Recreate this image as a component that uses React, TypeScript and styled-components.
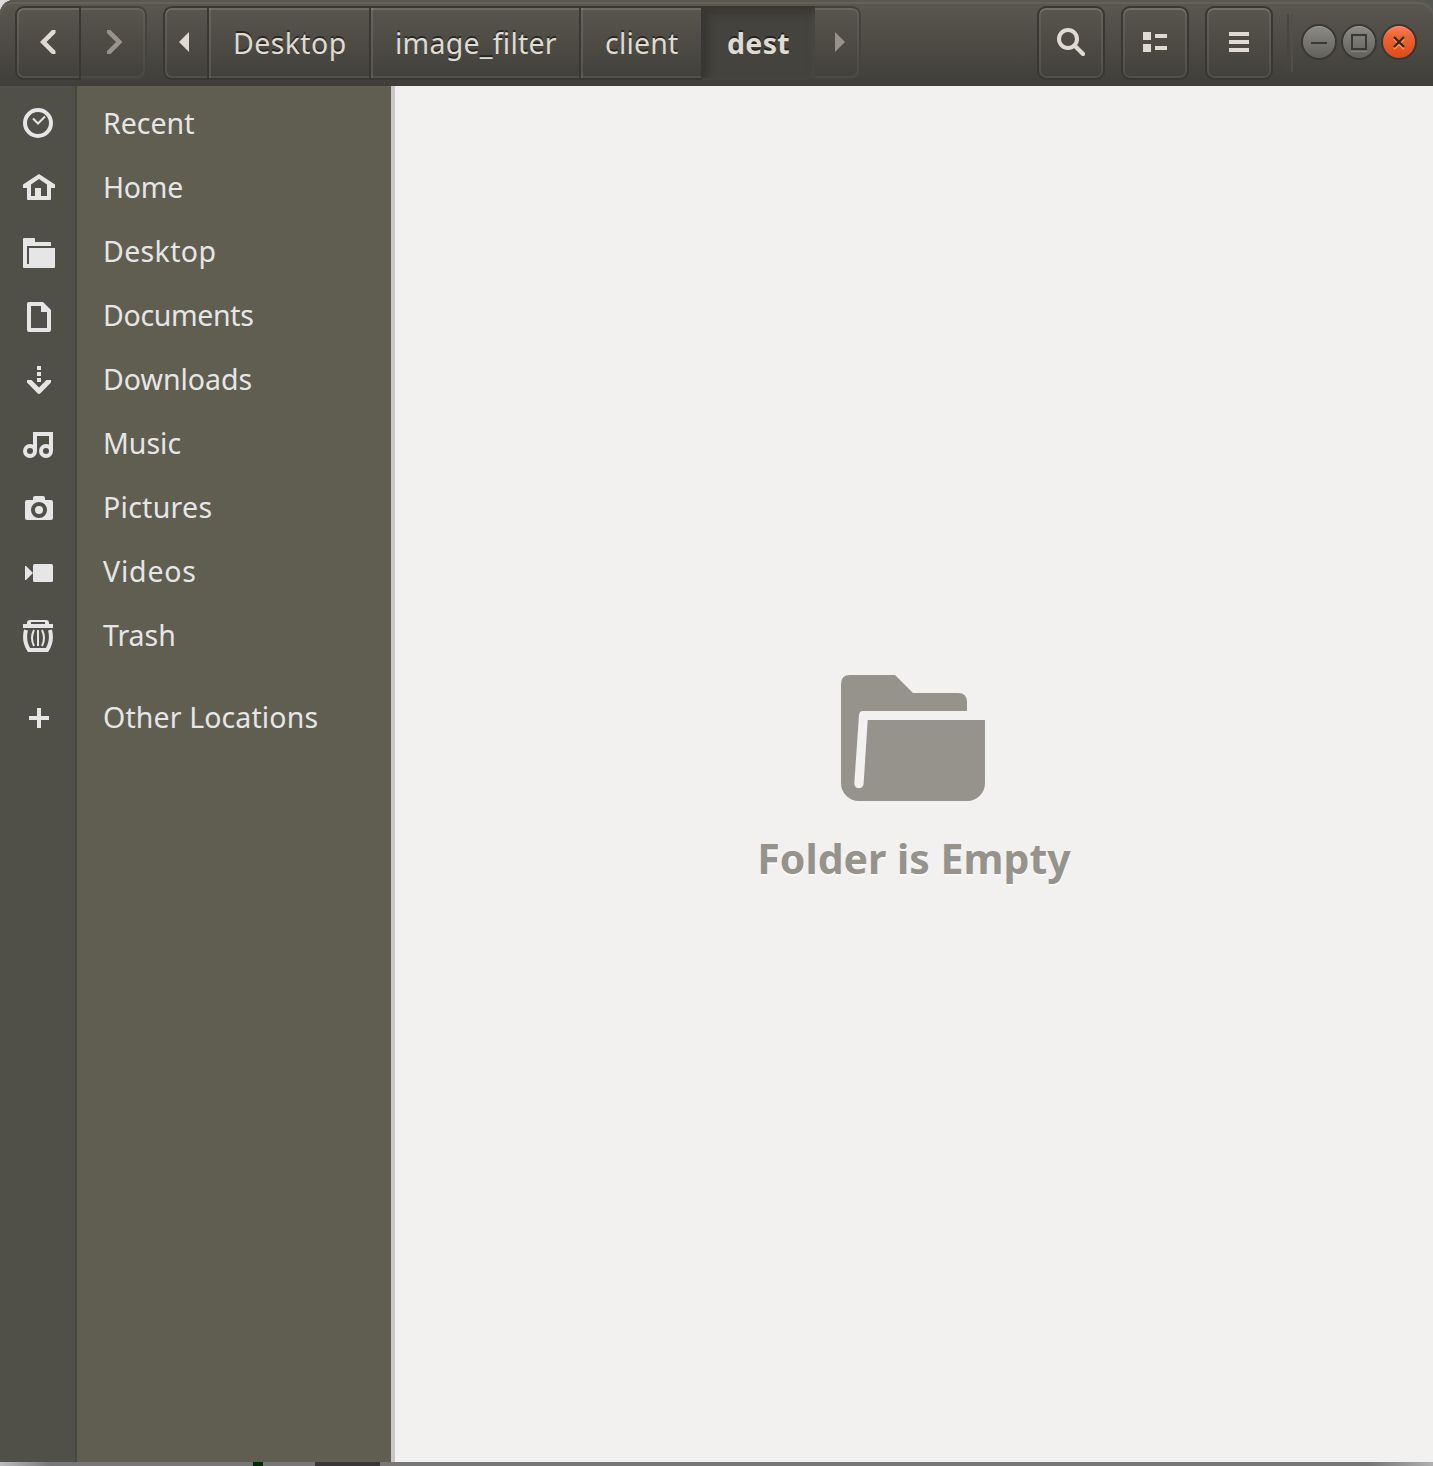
import React from "react";
import styled, { createGlobalStyle, css } from "styled-components";

const Global = createGlobalStyle`
  html, body { margin: 0; padding: 0; background: #c9c9c9; }
  *, *::before, *::after { box-sizing: border-box; }
`;

const font = `"Noto Sans", "Open Sans", sans-serif`;

const Window = styled.div`
  width: 1433px;
  height: 1466px;
  display: flex;
  flex-direction: column;
  overflow: hidden;
  font-family: ${font};
  font-size: 28.5px;
  background: linear-gradient(90deg, #dcdcdc 0 50%, #555 50%);
`;

const HeaderBar = styled.header`
  height: 86px;
  flex: none;
  display: flex;
  align-items: flex-start;
  padding: 6px 16px 0 15px;
  border-radius: 14px 14px 0 0;
  color: #dfdbd2;
  background: linear-gradient(#5b5850, #403e39);
  box-shadow: inset 0 2px #5a574e, inset 0 4px #646158;
`;

const Group = styled.div<{ $gap: number }>`
  display: flex;
  margin-right: ${(p) => p.$gap}px;
`;

const raised = css`
  border: 2px solid #383733;
  box-shadow: inset 0 2px rgba(255, 255, 235, 0.09), inset 0 0 0 2px rgba(255, 255, 235, 0.08);
`;

const Button = styled.button<{
  $w: number;
  $side?: "first" | "middle" | "last";
  $dim?: boolean;
  $padLeft?: number;
  $padRight?: number;
}>`
  width: ${(p) => p.$w}px;
  height: 74px;
  padding: 0 ${(p) => p.$padRight ?? 0}px 2px ${(p) => p.$padLeft ?? 0}px;
  display: flex;
  align-items: center;
  justify-content: center;
  color: ${(p) => (p.$dim ? "#97938b" : "#dfdbd2")};
  background: none;
  font: inherit;
  ${raised}
  border-radius: ${(p) =>
    p.$side === "first" ? "9px 0 0 9px" : p.$side === "middle" ? "0" : p.$side === "last" ? "0 9px 9px 0" : "9px"};
  ${(p) =>
    p.$side === "first" &&
    "border-right: 0; box-shadow: inset 0 2px rgba(255,255,235,.13), inset 2px 0 rgba(255,255,235,.08), inset 0 -2px rgba(255,255,235,.08);"}
  ${(p) =>
    p.$side === "middle" &&
    "border-right: 0; box-shadow: inset 0 2px rgba(255,255,235,.13), inset 2px 0 rgba(255,255,235,.1), inset 0 -2px rgba(255,255,235,.08);"}
  ${(p) =>
    p.$dim &&
    "border-color: #45433e; border-left: 0; box-shadow: inset 0 2px rgba(255,255,235,.09), inset -2px -2px rgba(255,255,235,.05);"}
`;

const BackButton = styled(Button)`
  border-right: 2px solid #383733;
`;

const Crumb = styled(Button)<{ $spacing: number }>`
  letter-spacing: ${(p) => p.$spacing}px;
  text-shadow: 0 -2px rgba(0, 0, 0, 0.48);
  justify-content: flex-start;
  padding: 0 0 0 24px;
  white-space: nowrap;
`;

const CurrentCrumb = styled(Crumb)`
  font-weight: 700;
  border-color: #383733 transparent #45433e #383733;
  background: #45433e;
  box-shadow: inset 5px 5px 8px rgba(30, 30, 25, 0.35), inset -3px 0 6px rgba(110, 108, 95, 0.2);
`;

const Spacer = styled.div`
  flex: 1;
`;

const Divider = styled.div`
  width: 6px;
  height: 58px;
  margin: 8px 8px 0 0;
  border-left: 2px solid #474540;
  border-right: 2px solid #514f48;
`;

const WindowControls = styled.div`
  display: flex;
  gap: 4px;
  margin-top: 18px;
`;

const Control = styled.button<{ $close?: boolean }>`
  width: 36px;
  height: 36px;
  padding: 0;
  border: 2px solid #3a3834;
  border-radius: 50%;
  display: flex;
  color: #3a3833;
  background: ${(p) => (p.$close ? "linear-gradient(#f5825f, #ee6536 30%, #df4a16)" : "linear-gradient(#8b8a85, #62615c)")};
  box-shadow: inset 0 1px rgba(255, 255, 255, 0.18);
`;

const Body = styled.div`
  display: flex;
  height: 1376px;
  flex: none;
`;

const Sidebar = styled.nav`
  width: 395px;
  flex: none;
  padding-top: 6px;
  border-right: 4px solid #cac8c6;
  background: linear-gradient(90deg, #505048 0 75px, #474740 75px 77px, #605d51 77px);
`;

const Place = styled.a<{ $spacing: number; $apart?: boolean }>`
  display: flex;
  align-items: center;
  height: 64px;
  margin-top: ${(p) => (p.$apart ? 18 : 0)}px;
  padding-left: 23px;
  gap: 48px;
  color: #e6e6e6;
  letter-spacing: ${(p) => p.$spacing}px;
  white-space: nowrap;
`;

const PlaceLabel = styled.span`
  padding-bottom: 2px;
`;

const Glyph = styled.svg`
  display: block;
  flex: none;
  fill: currentColor;
`;

const Content = styled.main`
  flex: 1;
  display: flex;
  flex-direction: column;
  align-items: center;
  padding-top: 589px;
  background: #f2f1ef;
  color: #96928c;
`;

const FolderGlyph = styled(Glyph)`
  margin-right: 2px;
`;

const EmptyLabel = styled.h1`
  margin: 29px 0 0;
  font-size: 41px;
  line-height: 56px;
  font-weight: 700;
  white-space: nowrap;
  text-shadow: 0 2px #fbfaf9;
`;

const Backdrop = styled.div`
  height: 4px;
  background: linear-gradient(90deg, transparent 253px, #032b03 253px 263px, transparent 263px 315px, #383636 315px 380px, transparent 380px),
    linear-gradient(90deg, #bdbdbd, #777 50px 1370px, #b0b0b0);
`;

const stroke = { fill: "none", stroke: "currentColor" } as const;

const places: { label: string; spacing: number; icon: React.ReactNode }[] = [
  {
    label: "Recent",
    spacing: 0,
    icon: (
      <g {...stroke}>
        <circle cx="15" cy="15" r="13" strokeWidth="4" />
        <path d="M10 10.5l5 5 7-7" strokeWidth="2" />
      </g>
    ),
  },
  {
    label: "Home",
    spacing: -0.25,
    icon: (
      <path
        fillRule="evenodd"
        d="M16 2L32 12.5V16H28V27Q28 28 27 28H5Q4 28 4 27V16H0V12.5ZM16 7L8 12.5V24H12V16H18V24H24V12.5Z"
      />
    ),
  },
  {
    label: "Desktop",
    spacing: 0.35,
    icon: <path d="M1 2H11Q12 2 12 3V6H27Q28 6 28 7V10H4V28H6V12H32V31Q32 32 31 32H1Q0 32 0 31V3Q0 2 1 2Z" />,
  },
  {
    label: "Documents",
    spacing: -0.33,
    icon: <path fillRule="evenodd" d="M6 2H20L28 10V30Q28 32 26 32H6Q4 32 4 30V4Q4 2 6 2ZM8 6V28H24V12H18V6Z" />,
  },
  {
    label: "Downloads",
    spacing: 0,
    icon: (
      <>
        <path d="M14 2h4v4h-4zM14 8h4v4h-4zM14 14h4v4h-4z" />
        <path d="M4 16H8.5L16 23.5 23.5 16H28V18.5L17.5 29.3Q16 30.6 14.5 29.3L4 18.5Z" />
      </>
    ),
  },
  {
    label: "Music",
    spacing: 0,
    icon: (
      <g {...stroke} strokeWidth="4">
        <circle cx="7" cy="23" r="5" />
        <circle cx="23" cy="23" r="5" />
        <path d="M12 23V6H28V23" />
      </g>
    ),
  },
  {
    label: "Pictures",
    spacing: 0.28,
    icon: (
      <>
        <path
          fillRule="evenodd"
          d="M4 8H10V6Q10 4 12 4H20Q22 4 22 6V8H28Q30 8 30 10V26Q30 28 28 28H4Q2 28 2 26V10Q2 8 4 8ZM16 10A8 8 0 1 0 16 26 8 8 0 1 0 16 10Z"
        />
        <circle cx="16" cy="18" r="4" />
      </>
    ),
  },
  {
    label: "Videos",
    spacing: 0.8,
    icon: (
      <>
        <rect x="10" y="8" width="20" height="18" rx="1.5" />
        <path d="M2 10L3 10 10 17 3 24H2Z" />
      </>
    ),
  },
  {
    label: "Trash",
    spacing: 0,
    icon: (
      <>
        <path fillRule="evenodd" d="M0 4H4V3Q4 0 7 0H23Q26 0 26 3V4H30V8H0ZM8 2V4H22V2Z" />
        <g {...stroke}>
          <path d="M3 10C1.2 17 2.8 25 6 30H24C27.2 25 28.8 17 27 10" strokeWidth="4" />
          <path d="M11 10C8.5 15 8.5 21 11 26M15 10V26M19 10C21.5 15 21.5 21 19 26" strokeWidth="2" />
        </g>
      </>
    ),
  },
  { label: "Other Locations", spacing: 0.12, icon: <path d="M14 6h4v8h8v4h-8v8h-4v-8H6v-4h8z" /> },
];

export default function App() {
  return (
    <>
      <Global />
      <Window>
        <HeaderBar>
          <Group $gap={16}>
            <BackButton $w={66} $side="first" aria-label="Back">
              <Glyph width="16" height="24">
                <path d="M0 12L12 0H15.5V3L6.5 12 15.5 21V24H12Z" />
              </Glyph>
            </BackButton>
            <Button $w={66} $side="last" $dim $padLeft={4} aria-label="Forward">
              <Glyph width="16" height="24">
                <path d="M15.5 12L3.5 0H0V3L9 12 0 21V24H3.5Z" />
              </Glyph>
            </Button>
          </Group>
          <Group $gap={0}>
            <Button $w={44} $side="first" $padRight={4} aria-label="Scroll left">
              <Glyph width="10" height="20">
                <path d="M0 10L10 0V20Z" />
              </Glyph>
            </Button>
            <Crumb $w={162} $side="middle" $spacing={0.4}>Desktop</Crumb>
            <Crumb $w={210} $side="middle" $spacing={0.25}>image_filter</Crumb>
            <Crumb $w={122} $side="middle" $spacing={0.2}>client</Crumb>
            <CurrentCrumb $w={114} $side="middle" $spacing={0.3}>dest</CurrentCrumb>
            <Button $w={46} $side="last" $dim $padLeft={6} aria-label="Scroll right">
              <Glyph width="10" height="20">
                <path d="M10 10L0 0V20Z" />
              </Glyph>
            </Button>
          </Group>
          <Spacer />
          <Group $gap={16}>
            <Button $w={68} aria-label="Search">
              <Glyph width="28" height="28">
                <circle cx="11" cy="11" r="9" fill="none" stroke="currentColor" strokeWidth="4" />
                <path d="M17.5 17.5L26 26" stroke="currentColor" strokeWidth="4.2" strokeLinecap="round" />
              </Glyph>
            </Button>
          </Group>
          <Group $gap={16}>
            <Button $w={68} aria-label="View">
              <Glyph width="24" height="20">
                <path d="M0 0h8v8H0zM0 12h8v8H0zM12 2h12v4H12zM12 14h12v4H12z" />
              </Glyph>
            </Button>
          </Group>
          <Group $gap={14}>
            <Button $w={68} aria-label="Menu">
              <Glyph width="20" height="20">
                <path d="M0 0h20v4H0zM0 8h20v4H0zM0 16h20v4H0z" />
              </Glyph>
            </Button>
          </Group>
          <Divider />
          <WindowControls>
            <Control aria-label="Minimize">
              <Glyph width="32" height="32">
                <path d="M8 16h16v2H8z" />
              </Glyph>
            </Control>
            <Control aria-label="Maximize">
              <Glyph width="32" height="32">
                <path d="M8 25h16v1H8z" fill="#85847f" />
                <rect x="9" y="9" width="14" height="14" fill="none" stroke="currentColor" strokeWidth="2" />
              </Glyph>
            </Control>
            <Control $close aria-label="Close">
              <Glyph width="32" height="32">
                <path d="M11 13L21 23M21 13L11 23" stroke="#f79a76" strokeWidth="2" />
                <path d="M11 11L21 21M21 11L11 21" stroke="#3b2a12" strokeWidth="2.4" />
              </Glyph>
            </Control>
          </WindowControls>
        </HeaderBar>
        <Body>
          <Sidebar>
            {places.map((p) => (
              <Place key={p.label} $spacing={p.spacing} $apart={p.label === "Other Locations"}>
                <Glyph width="32" height="32">{p.icon}</Glyph>
                <PlaceLabel>{p.label}</PlaceLabel>
              </Place>
            ))}
          </Sidebar>
          <Content>
            <FolderGlyph width="144" height="126">
              <path d="M9 0H54L72 18H117Q126 18 126 27V36H22Q18.3 36 18 40L13.3 108A4.6 4.6 0 0 0 22.6 109L26.7 45H144V108A18 18 0 0 1 126 126H18A18 18 0 0 1 0 108V9Q0 0 9 0Z" />
            </FolderGlyph>
            <EmptyLabel>Folder is Empty</EmptyLabel>
          </Content>
        </Body>
        <Backdrop />
      </Window>
    </>
  );
}
